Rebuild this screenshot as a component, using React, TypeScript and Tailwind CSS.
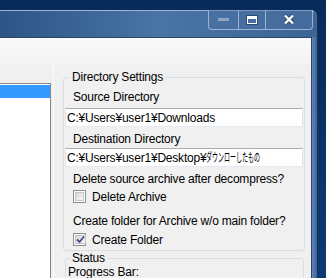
import React from 'react';

const font = 'font-["Liberation_Sans","Noto_Sans_CJK_JP",sans-serif]';

const Checkbox: React.FC<{ checked?: boolean }> = ({ checked }) => (
    <span className="w-[13px] h-[13px] shrink-0 border border-[#8e8f8f] bg-white p-[1px] flex">
        <span className="flex-1 flex items-center justify-center border border-[#c4c4c4] bg-gradient-to-br from-[#d8d8d8] to-[#f7f7f7]">
            {checked && (
                <svg width="9" height="9" viewBox="0 0 9 9">
                    <path d="M1 4.5 L3.5 7 L8 1.5" fill="none" stroke="#3c4f8c" strokeWidth="1.8" />
                </svg>
            )}
        </span>
    </span>
);

const TextBox: React.FC<{ children: React.ReactNode }> = ({ children }) => (
    <div className="mx-[1px] min-w-0 h-[19px] bg-white border border-[#e2e3ea] border-t-[#abadb3] border-b-[#e3e9ef] pl-[1px] flex items-center overflow-hidden whitespace-nowrap">
        {children}
    </div>
);

const App: React.FC = () => {
    return (
        <div className={`w-[326px] h-[278px] overflow-hidden bg-gradient-to-b from-[#092b5a] to-[#0c3a74] pt-[10px] text-[12px] leading-[14px] tracking-[-0.2px] text-black ${font}`}>
            <div className="w-[318px] h-[268px] flex flex-col rounded-tr-[7px] border-r border-[#1b3152] bg-gradient-to-r from-[#2d5587] via-[#4a74a6] to-[#3c6597] shadow-[inset_0_1px_0_#9fb5d2]">
                {/* title bar */}
                <div className="h-[27px] flex justify-end pr-[4px]">
                    <div className="h-[20px] flex border border-t-0 border-[#9cb2cf] rounded-b-[4px] bg-[#4d75a6]/40">
                        <div className="w-[29px] flex items-center justify-center">
                            <span className="w-[11px] h-[3px] bg-[#8ea4c3]" />
                        </div>
                        <div className="w-[1px] bg-[#9cb2cf]" />
                        <div className="w-[26px] flex items-center justify-center">
                            <span className="w-[10px] h-[8px] border border-white border-t-[3px] shadow-[0_0_0_1px_#2b4a74]" />
                        </div>
                        <div className="w-[1px] bg-[#9cb2cf]" />
                        <div className="w-[46px] flex items-center justify-center">
                            <svg width="12" height="11" viewBox="0 0 12 11">
                                <path d="M2 1.5 L10 9.5 M10 1.5 L2 9.5" stroke="#2b4a74" strokeWidth="4" />
                                <path d="M2 1.5 L10 9.5 M10 1.5 L2 9.5" stroke="#ffffff" strokeWidth="2.4" />
                            </svg>
                        </div>
                    </div>
                </div>

                <div className="flex-1 flex min-h-0">
                    {/* client area */}
                    <div className="flex-1 min-w-0 flex flex-col bg-[#f0f0f0] border-t border-r border-[#2b4468]">
                        <div className="h-[27px] bg-gradient-to-b from-[#fafafa] to-[#f3f3f3]" />
                        <div className="flex-1 flex min-h-0">
                            <div className="w-[51px] pt-[18px] flex flex-col">
                                <div className="flex-1 bg-white border-t border-r border-[#828790] pt-[1px]">
                                    <div className="h-[13px] bg-[#3399ff]" />
                                </div>
                            </div>
                            <div className="w-[12px] flex">
                                <div className="ml-[2px] w-[1px] bg-[#fbfbfb]" />
                            </div>
                            <div className="flex-1 min-w-0 pr-[6px] flex flex-col">
                                <fieldset className="min-w-0 mt-[5px] border border-[#d5dfe5] rounded-[3px] pb-[2px]">
                                    <legend className="ml-[6px] px-[2px]">Directory Settings</legend>
                                    <div className="pl-[9px] mt-[6px]">Source Directory</div>
                                    <div className="mt-[4px]">
                                        <TextBox>C:¥Users¥user1¥Downloads</TextBox>
                                    </div>
                                    <div className="pl-[9px] mt-[5px]">Destination Directory</div>
                                    <div className="mt-[2px]">
                                        <TextBox>
                                            C:¥Users¥user1¥Desktop¥
                                            <span className="inline-block scale-x-50 origin-left tracking-normal">ダウンローしたもの</span>
                                        </TextBox>
                                    </div>
                                    <div className="pl-[9px] mt-[5px]">Delete source archive after decompress?</div>
                                    <label className="pl-[9px] mt-[2px] h-[17px] flex items-center gap-[6px]">
                                        <Checkbox />
                                        <span>Delete Archive</span>
                                    </label>
                                    <div className="pl-[9px] mt-[9px]">Create folder for Archive w/o main folder?</div>
                                    <label className="pl-[9px] mt-[3px] h-[17px] flex items-center gap-[6px]">
                                        <Checkbox checked />
                                        <span>Create Folder</span>
                                    </label>
                                </fieldset>
                                <fieldset className="min-w-0 ml-[2px] mr-[1px] border border-[#d5dfe5] rounded-[3px]">
                                    <legend className="ml-[4px] px-[2px]">Status</legend>
                                    <div className="pl-[2px]">Progress Bar:</div>
                                </fieldset>
                            </div>
                        </div>
                    </div>
                    {/* right frame */}
                    <div className="w-[5px] bg-gradient-to-r from-[#5d86bd] to-[#3d6496]" />
                </div>
            </div>
        </div>
    );
};

export default App;
